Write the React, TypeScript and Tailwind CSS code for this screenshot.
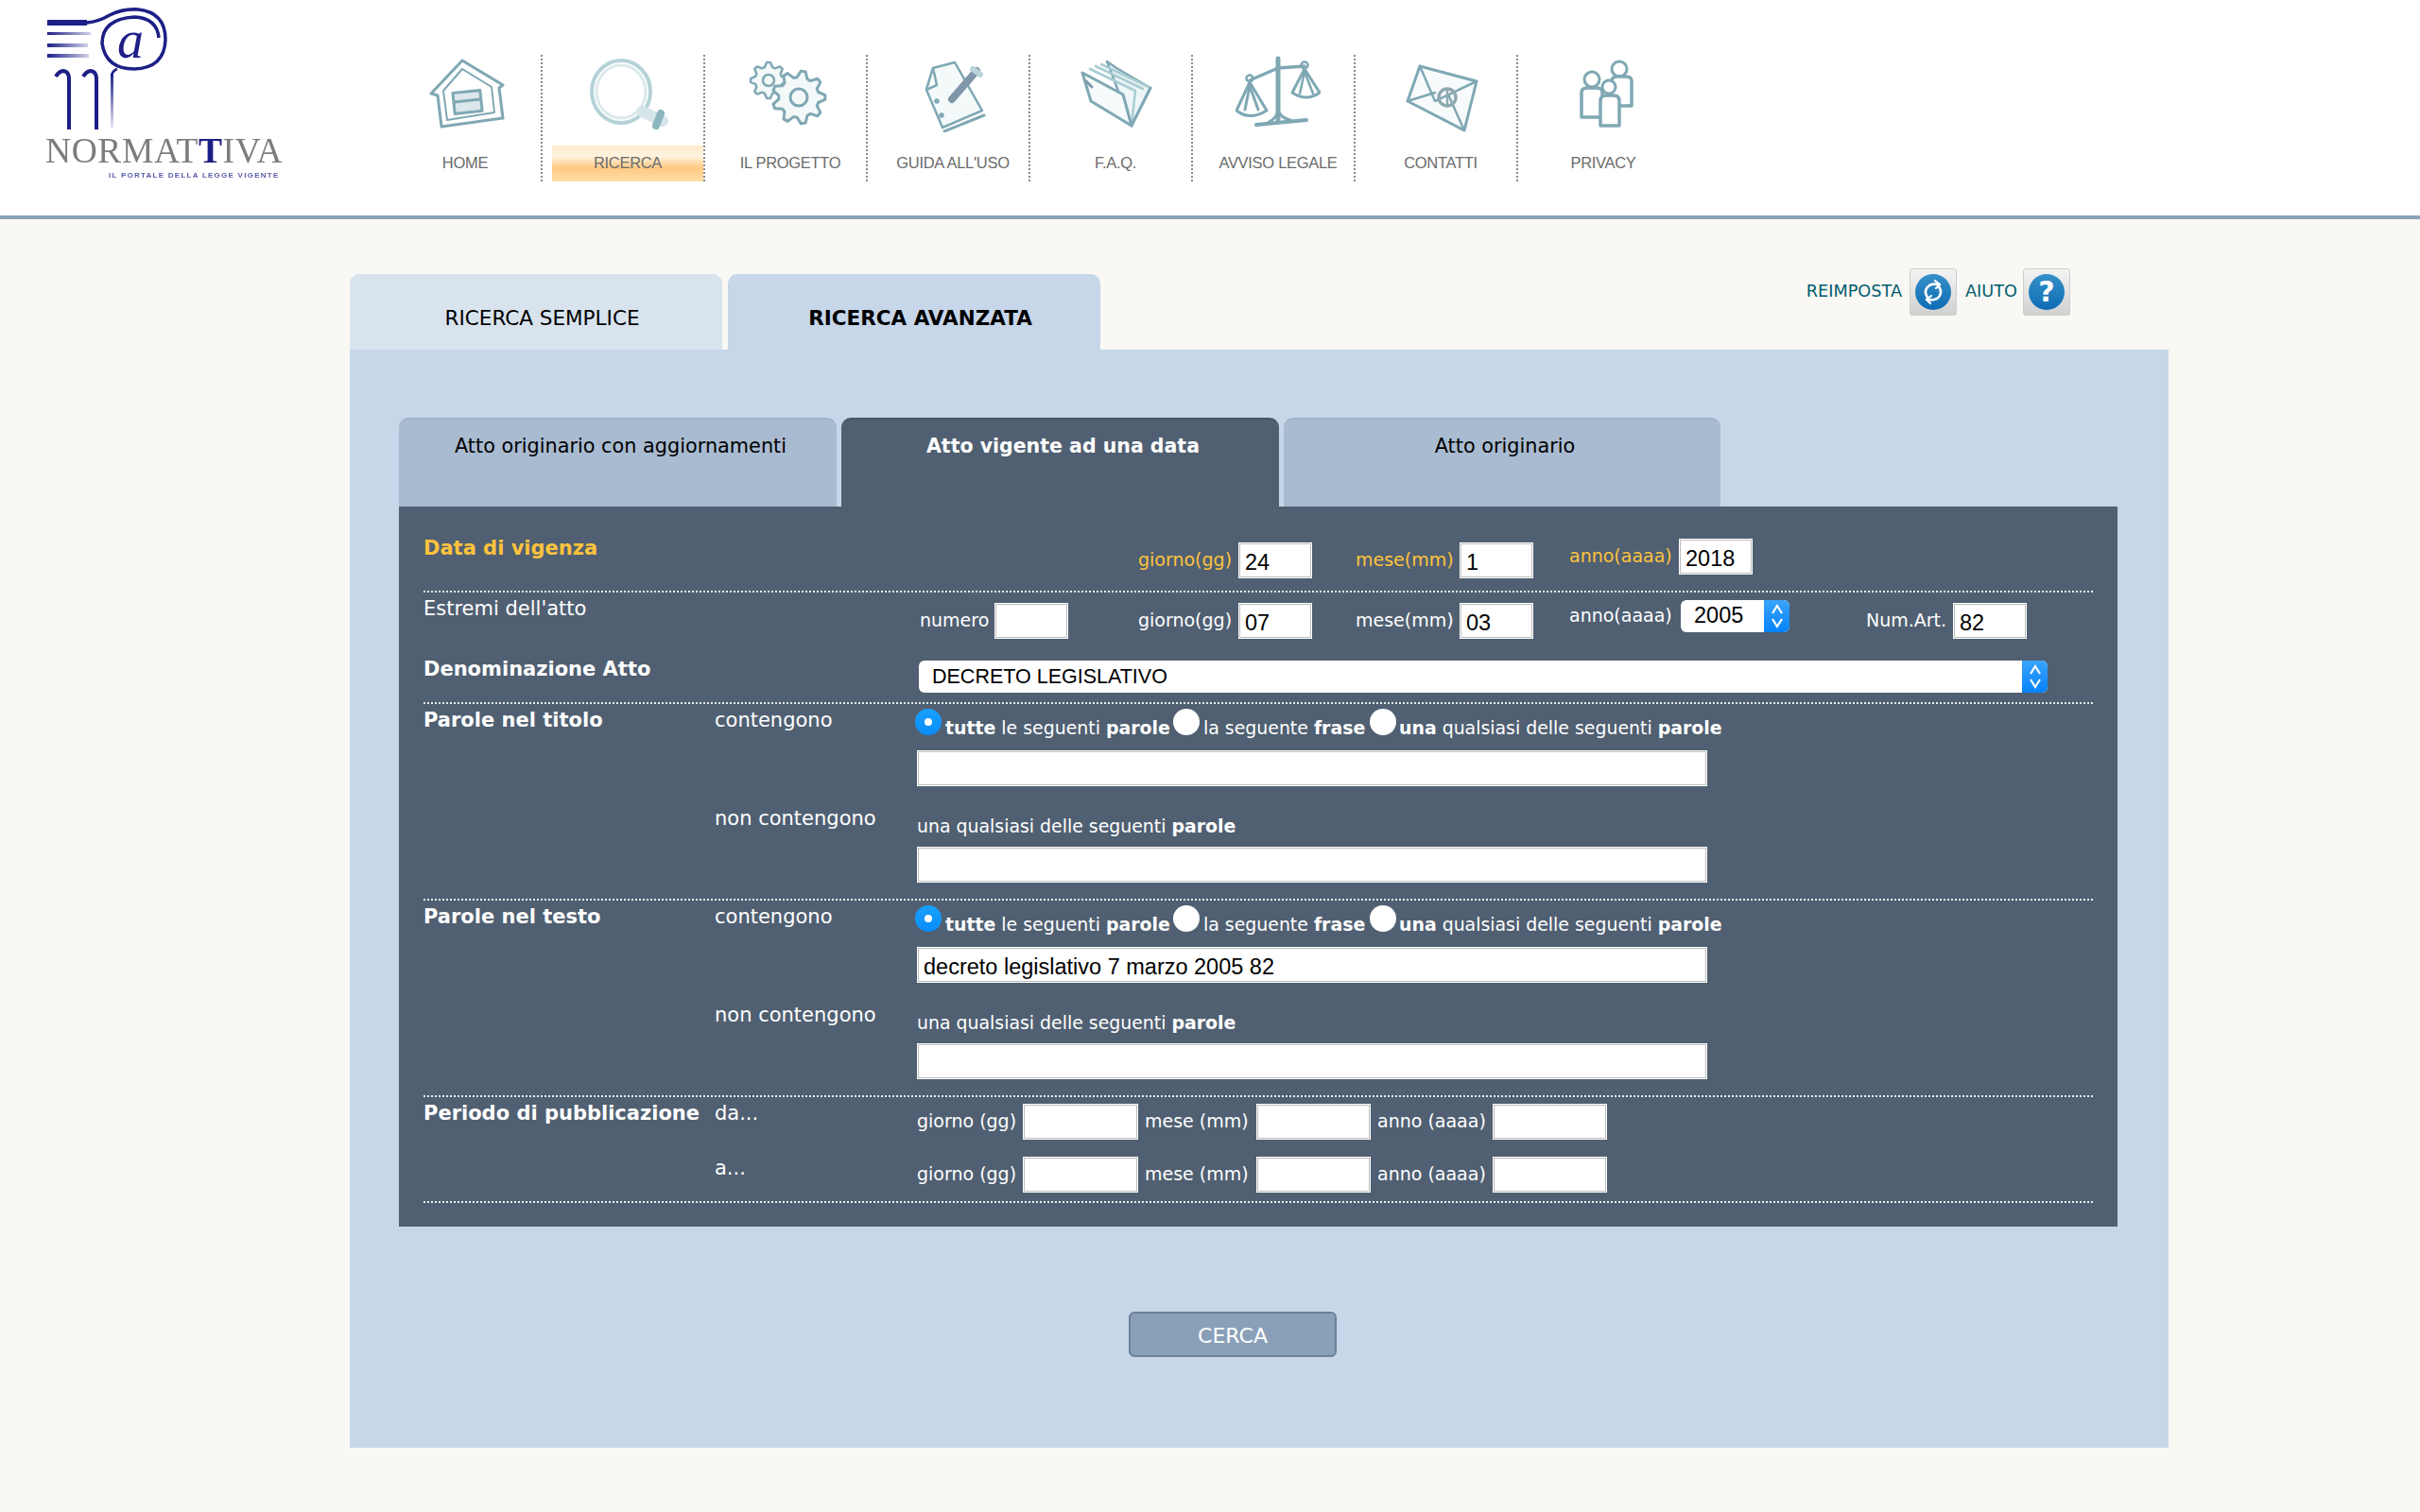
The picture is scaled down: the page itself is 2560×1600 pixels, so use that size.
import React, { ReactNode } from 'react';

const UI_FONT = "font-['DejaVu_Sans',Verdana,sans-serif]";
const STROKE = '#7fa8b4';

const gearPath = (cx: number, cy: number, r: number, teeth: number) => {
  const pts: string[] = [];
  const steps = teeth * 4;
  for (let i = 0; i < steps; i++) {
    const a = ((i - 0.5) / steps) * Math.PI * 2;
    const rad = i % 4 < 2 ? r : r * 0.76;
    pts.push(`${(cx + Math.cos(a) * rad).toFixed(1)} ${(cy + Math.sin(a) * rad).toFixed(1)}`);
  }
  return `M${pts.join('L')}Z`;
};

const IconShell = ({ children }: { children: ReactNode }) => (
  <svg
    width="90"
    height="84"
    viewBox="0 0 90 84"
    fill="none"
    stroke={STROKE}
    strokeWidth="2.5"
    strokeLinejoin="round"
    strokeLinecap="round"
    className="block -mt-[2px] blur-[0.5px]"
  >
    {children}
  </svg>
);

const HomeIcon = () => (
  <IconShell>
    <path d="M42 8 L9 43 L16 45 L20 78 L85 69 L81 37 L85 34 Z" strokeWidth="3" />
    <path d="M42 17 L22 40 L26 71 L76 63 L73 36 Z" strokeWidth="2" />
    <rect x="33" y="41" width="29" height="22" fill="#dbe7ea" strokeWidth="3" transform="rotate(-6 47 52)" />
    <path d="M34 52 L61 49" strokeWidth="3" />
  </IconShell>
);

const SearchIcon = () => (
  <IconShell>
    <ellipse cx="38" cy="41" rx="31" ry="33" stroke="#b4d2d7" strokeWidth="4" />
    <ellipse cx="38" cy="41" rx="26" ry="28" stroke="#dce9eb" strokeWidth="3" />
    <path d="M60 62 L82 72" stroke="#d5e5e8" strokeWidth="12" />
    <path d="M80 64 L75 77" stroke="#8bb6bf" strokeWidth="8" />
  </IconShell>
);

const GearsIcon = () => (
  <IconShell>
    <path d={gearPath(22, 29, 19, 8)} fill="#f3f8f9" strokeWidth="2.5" />
    <circle cx="22" cy="29" r="6" strokeWidth="2.5" />
    <path d={gearPath(54, 47, 28, 9)} fill="#f3f8f9" strokeWidth="3" />
    <circle cx="54" cy="47" r="9" strokeWidth="3" />
  </IconShell>
);

const GuideIcon = () => (
  <IconShell>
    <path d="M24 16 L47 10 L76 61 L34 79 L17 39 Z" fill="#f4f9fa" />
    <path d="M24 16 L17 39 L28 34 Z" fill="#fff" />
    <path d="M36 83 L78 66" strokeWidth="3" />
    <path d="M44 49 L70 19" stroke="#7f97a8" strokeWidth="8" />
    <path d="M66 17 L74 23" stroke="#b9d3d9" strokeWidth="6" />
    <circle cx="28" cy="51" r="1.5" />
    <circle cx="33" cy="66" r="1.5" />
  </IconShell>
);

const FolderIcon = () => (
  <IconShell>
    <path d="M36 9 L46 16 L82 37 L62 77 Z" fill="#eef6f7" />
    <path d="M18 17 L66 40 L62 77 M24 14 L74 38 M30 12 L80 36" stroke="#a9ccd3" />
    <path d="M10 21 L53 44 L62 77 L19 51 Z" fill="#f6fafb" strokeWidth="3" />
    <path d="M62 77 L82 37" strokeWidth="3" />
    <path d="M14 30 L20 36" stroke="#7f97a8" strokeWidth="3" />
  </IconShell>
);

const ScaleIcon = () => (
  <IconShell>
    <path d="M45 6 L45 72" strokeWidth="5" />
    <path d="M22 76 L75 71" strokeWidth="4" />
    <path d="M34 74 Q45 68 45 60 Q46 68 60 72" strokeWidth="3" />
    <path d="M15 29 L45 16 L73 14" strokeWidth="3.5" />
    <circle cx="15" cy="27" r="3.5" />
    <circle cx="73" cy="13" r="3.5" />
    <path d="M15 31 L1 61 Q15 72 33 61 Z" strokeWidth="3" />
    <path d="M15 35 L10 60 M15 35 L24 60" strokeWidth="3" />
    <path d="M73 17 L60 42 Q75 52 89 42 L73 17" strokeWidth="3" />
    <path d="M73 20 L68 43 M73 20 L82 43" strokeWidth="2.5" />
  </IconShell>
);

const EnvelopeIcon = () => (
  <IconShell>
    <path d="M23 14 L83 30 L70 82 L10 51 Z" fill="#f7fbfc" strokeWidth="3" />
    <path d="M23 14 L39 51 L83 30" strokeWidth="2.5" />
    <path d="M10 51 L39 42 M70 82 L53 44" strokeWidth="2.5" />
    <circle cx="52" cy="47" r="9" stroke="#8fa9b1" strokeWidth="3.5" />
    <path d="M52 38 L52 56" stroke="#8fa9b1" strokeWidth="2.5" />
  </IconShell>
);

const PeopleIcon = () => (
  <IconShell>
    <circle cx="62" cy="17" r="8" strokeWidth="3" />
    <path d="M54 56 L54 30 Q54 25 60 25 L69 25 Q75 25 75 30 L75 56 L60 56" fill="#fff" strokeWidth="3.5" />
    <circle cx="33" cy="28" r="8" strokeWidth="3" />
    <path d="M22 68 L22 42 Q22 37 28 37 L38 37 Q44 37 44 42 L44 68 Z" fill="#fff" strokeWidth="3.5" />
    <circle cx="51" cy="36" r="7" fill="#fff" strokeWidth="3" />
    <path d="M42 77 L42 51 Q42 45 48 45 L56 45 Q62 45 62 51 L62 77 Z" fill="#fff" strokeWidth="3.5" />
  </IconShell>
);

const NAV_ITEMS = [
  { label: 'HOME', icon: <HomeIcon /> },
  { label: 'RICERCA', icon: <SearchIcon />, active: true },
  { label: 'IL PROGETTO', icon: <GearsIcon /> },
  { label: "GUIDA ALL'USO", icon: <GuideIcon /> },
  { label: 'F.A.Q.', icon: <FolderIcon /> },
  { label: 'AVVISO LEGALE', icon: <ScaleIcon /> },
  { label: 'CONTATTI', icon: <EnvelopeIcon /> },
  { label: 'PRIVACY', icon: <PeopleIcon /> },
];

const Logo = () => (
  <div className="w-[402px] shrink-0">
    <svg width="320" height="144" viewBox="0 0 320 144" fill="none" className="block blur-[0.5px]">
      <defs>
        <linearGradient id="fade" x1="0" x2="1" y1="0" y2="0">
          <stop offset="0" stopColor="#1d1f86" />
          <stop offset="1" stopColor="#1d1f86" stopOpacity="0.2" />
        </linearGradient>
        <linearGradient id="fadeDown" x1="0" x2="0" y1="0" y2="1">
          <stop offset="0" stopColor="#1d1f86" />
          <stop offset="1" stopColor="#1d1f86" stopOpacity="0.1" />
        </linearGradient>
      </defs>
      <path
        d="M50 24 L92 24 Q104 23 116 16 Q130 9 146 10 Q175 13 175 42 Q174 72 142 73 Q112 73 108 46 Q108 20 142 18 Q166 19 168 40"
        stroke="#1d1f86"
        strokeWidth="3.5"
      />
      <path d="M50 24 L92 24" stroke="#1d1f86" strokeWidth="6" />
      <rect x="50" y="34" width="46" height="3" fill="url(#fade)" />
      <rect x="50" y="46" width="43" height="4" fill="url(#fade)" />
      <rect x="50" y="57" width="44" height="4" fill="url(#fade)" />
      <text x="124" y="61" fontFamily="'Liberation Serif',serif" fontStyle="italic" fontWeight="400" fontSize="56" fill="#1d1f86">
        a
      </text>
      <path d="M59 81 Q64 73 70 76 Q73 78 73 84 L73 137" stroke="#1d1f86" strokeWidth="4" />
      <path d="M88 81 Q93 73 99 76 Q102 78 102 84 L102 137" stroke="#1d1f86" strokeWidth="4" />
      <rect x="117" y="78" width="3" height="58" fill="url(#fadeDown)" />
      <path d="M118 80 Q119 75 124 73" stroke="#1d1f86" strokeWidth="2.5" />
    </svg>
    <p className="ml-[48px] mt-[-1px] h-[34px] font-['Liberation_Serif',serif] text-[37.5px] leading-[34px] tracking-[0.6px] text-[#7d7d7d] whitespace-nowrap blur-[0.4px]">
      NORMAT<span className="font-bold text-[#1d1f86]">T</span>IVA
    </p>
    <p className="ml-[115px] mt-[4px] font-['Liberation_Sans',sans-serif] text-[8px] font-bold leading-[10px] tracking-[1.25px] text-[#5a5ca8] whitespace-nowrap blur-[0.3px]">
      IL PORTALE DELLA LEGGE VIGENTE
    </p>
  </div>
);

const Header = () => (
  <header className="flex h-[232px] border-b-4 border-[#8aa2b9] bg-white">
    <Logo />
    <nav className="flex h-[134px] mt-[58px]">
      {NAV_ITEMS.map((item, i) => (
        <div
          key={item.label}
          className={`w-[172px] pl-[10px] flex flex-col ${i < NAV_ITEMS.length - 1 ? 'border-r-2 border-dotted border-[#8b8b8b]' : 'pr-[2px]'}`}
        >
          <div className="flex justify-center">{item.icon}</div>
          <div
            className={`mt-[14px] h-[38px] pb-[2px] flex items-center justify-center font-['Liberation_Sans',sans-serif] text-[16.5px] tracking-[-0.3px] text-[#6b6b6b] whitespace-nowrap ${
              item.active ? 'bg-[linear-gradient(#ffeacb_0%,#fff3e0_30%,#fdc982_62%,#ffdfa6_100%)]' : ''
            }`}
          >
            {item.label}
          </div>
        </div>
      ))}
    </nav>
  </header>
);

const Box = ({ w = 'w-[78px]', value = '' }: { w?: string; value?: string }) => (
  <input
    defaultValue={value}
    className={`${w} h-[38px] shrink-0 bg-white border border-white shadow-[inset_0_0_0_1px_#bdbdbd] pl-[6px] pr-[5px] pt-[4px] font-['Liberation_Sans',sans-serif] text-[23.5px] leading-[34px] text-black outline-none`}
  />
);

const Stepper = () => (
  <div className="w-[28px] h-[34px] rounded-r-[6px] bg-[linear-gradient(#3aa4fb,#0682fb)] shrink-0 flex items-center justify-center -mr-[1px]">
    <svg width="16" height="28" viewBox="0 0 16 28" fill="none" stroke="white" strokeWidth="2.2">
      <path d="M3 11 L8 3 L13 11" />
      <path d="M3 17 L8 25 L13 17" />
    </svg>
  </div>
);

const Select = ({ w, value, textClass }: { w: string; value: string; textClass: string }) => (
  <div className={`${w} h-[34px] shrink-0 flex items-center bg-white rounded-[6px] overflow-hidden`}>
    <span className={`flex-1 pl-[14px] ${textClass} font-['Liberation_Sans',sans-serif] text-black whitespace-nowrap`}>{value}</span>
    <Stepper />
  </div>
);

const Radio = ({ checked = false }: { checked?: boolean }) => (
  <span
    className={`w-[28px] h-[28px] rounded-full shrink-0 flex items-center justify-center ${
      checked ? 'bg-[linear-gradient(#18a0ff,#0a8cf8)]' : 'bg-white'
    }`}
  >
    {checked && <span className="w-[8px] h-[8px] rounded-full bg-white" />}
  </span>
);

const Small = ({ children }: { children: ReactNode }) => (
  <span className="text-[18.9px] leading-[28px] text-white whitespace-nowrap">{children}</span>
);

const WordRows = ({ value = '' }: { value?: string }) => (
  <div className="flex-1 flex flex-col items-start">
    <div className="flex mt-[5px] -ml-[2px] h-[28px]">
      <Radio checked />
      <span className="ml-[4px] mt-[6px] w-[241px]">
        <Small>
          <b>tutte</b> le seguenti <b>parole</b>
        </Small>
      </span>
      <Radio />
      <span className="ml-[4px] mt-[6px] w-[176px]">
        <Small>
          la seguente <b>frase</b>
        </Small>
      </span>
      <Radio />
      <span className="ml-[3px] mt-[6px]">
        <Small>
          <b>una</b> qualsiasi delle seguenti <b>parole</b>
        </Small>
      </span>
    </div>
    <div className="mt-[16px]">
      <Box w="w-[836px]" value={value} />
    </div>
    <div className="mt-[28px] h-[28px]">
      <Small>
        una qualsiasi delle seguenti <b>parole</b>
      </Small>
    </div>
    <div className="mt-[8px]">
      <Box w="w-[836px]" />
    </div>
  </div>
);

const WordSection = ({ title, value }: { title: string; value?: string }) => (
  <section className="flex h-[208px] border-b-2 border-dotted border-[#eceef1]">
    <h3 className="w-[308px] mt-[3px] shrink-0 text-[21px] font-bold leading-[28px] text-white">{title}</h3>
    <div className="w-[214px] shrink-0 text-[21px] leading-[28px] text-white">
      <p className="mt-[3px]">contengono</p>
      <p className="mt-[76px]">non contengono</p>
    </div>
    <WordRows value={value} />
  </section>
);

const DateCell = ({ label, w, box }: { label: string; w: string; box?: ReactNode }) => (
  <div className="flex items-center shrink-0">
    <span className={`${w} pb-[2px] text-[19px] leading-[28px] whitespace-nowrap`}>{label}</span>
    {box}
  </div>
);

const PeriodRow = ({ className }: { className: string }) => (
  <div className={`flex items-center ${className}`}>
    <DateCell label="giorno (gg)" w="w-[112px]" box={<Box w="w-[122px]" />} />
    <DateCell label="mese (mm)" w="w-[125px] pl-[7px]" box={<Box w="w-[121px]" />} />
    <DateCell label="anno (aaaa)" w="w-[129px] pl-[7px]" box={<Box w="w-[121px]" />} />
  </div>
);

const SearchForm = () => (
  <div className={`h-[762px] bg-[#506072] px-[26px] ${UI_FONT}`}>
    <section className="flex h-[91px] border-b-2 border-dotted border-[#eceef1] text-[#fdc33c]">
      <h3 className="w-[756px] shrink-0 mt-[30px] text-[21px] font-bold leading-[28px]">Data di vigenza</h3>
      <div className="w-[230px] shrink-0 mt-[38px]">
        <DateCell label="giorno(gg)" w="w-[106px]" box={<Box value="24" />} />
      </div>
      <div className="w-[226px] shrink-0 mt-[38px]">
        <DateCell label="mese(mm)" w="w-[110px]" box={<Box value="1" />} />
      </div>
      <div className="mt-[34px]">
        <DateCell label="anno(aaaa)" w="w-[116px]" box={<Box value="2018" />} />
      </div>
    </section>
    <section className="flex h-[63px] text-white">
      <h3 className="w-[525px] shrink-0 mt-[3px] text-[21px] leading-[28px]">Estremi dell'atto</h3>
      <div className="w-[231px] shrink-0 mt-[11px]">
        <DateCell label="numero" w="w-[79px]" box={<Box />} />
      </div>
      <div className="w-[230px] shrink-0 mt-[11px]">
        <DateCell label="giorno(gg)" w="w-[106px]" box={<Box value="07" />} />
      </div>
      <div className="w-[226px] shrink-0 mt-[11px]">
        <DateCell label="mese(mm)" w="w-[110px]" box={<Box value="03" />} />
      </div>
      <div className="w-[314px] shrink-0 mt-[8px]">
        <DateCell label="anno(aaaa)" w="w-[118px]" box={<Select w="w-[115px]" value="2005" textClass="text-[23.5px]" />} />
      </div>
      <div className="mt-[11px]">
        <DateCell label="Num.Art." w="w-[92px]" box={<Box value="82" />} />
      </div>
    </section>
    <section className="flex h-[55px] border-b-2 border-dotted border-[#eceef1] text-white">
      <h3 className="w-[524px] shrink-0 mt-[4px] text-[21px] font-bold leading-[28px]">Denominazione Atto</h3>
      <div className="mt-[9px]">
        <Select w="w-[1194px]" value="DECRETO LEGISLATIVO" textClass="text-[21.5px]" />
      </div>
    </section>
    <WordSection title="Parole nel titolo" />
    <WordSection title="Parole nel testo" value="decreto legislativo 7 marzo 2005 82" />
    <section className="flex h-[112px] border-b-2 border-dotted border-[#eceef1] text-white">
      <h3 className="w-[308px] shrink-0 mt-[3px] text-[21px] font-bold leading-[28px] whitespace-nowrap">Periodo di pubblicazione</h3>
      <div className="w-[214px] shrink-0 text-[21px] leading-[28px]">
        <p className="mt-[3px]">da...</p>
        <p className="mt-[30px]">a...</p>
      </div>
      <div className="flex-1">
        <PeriodRow className="mt-[7px]" />
        <PeriodRow className="mt-[18px]" />
      </div>
    </section>
  </div>
);

const ActionButton = ({ children }: { children: ReactNode }) => (
  <div className="w-[50px] h-[50px] rounded-[4px] bg-[linear-gradient(#f4f4f4,#d0d0d0)] shadow-[inset_0_0_0_1px_#cfcfcf] flex items-center justify-center shrink-0">
    <div className="w-[38px] h-[38px] rounded-full bg-[linear-gradient(#3590c8,#0f6cb5)] flex items-center justify-center">{children}</div>
  </div>
);

const Actions = () => (
  <div className={`ml-auto mr-[104px] -mt-[6px] flex items-center h-[50px] text-[17.7px] text-[#045c6e] ${UI_FONT}`}>
    <span className="mr-[8px] pb-[2px]">REIMPOSTA</span>
    <ActionButton>
      <svg width="30" height="30" viewBox="0 0 30 30" fill="none" stroke="white" strokeWidth="2.6" strokeLinecap="round">
        <path d="M9 21 Q4 13 11 8 Q15 6 21 7" />
        <path d="M21 9 Q26 17 19 22 Q15 24 9 23" />
        <path d="M17 3 L22 7 L18 11 M13 19 L8 23 L12 27" strokeWidth="2.2" />
      </svg>
    </ActionButton>
    <span className="ml-[9px] mr-[6px] pb-[2px]">AIUTO</span>
    <ActionButton>
      <span className="text-[30px] font-bold leading-none text-white">?</span>
    </ActionButton>
  </div>
);

const App = () => (
  <div className="min-h-[1600px] bg-[#f9f8f4]">
    <Header />
    <main className="ml-[370px] w-[1924px] pt-[58px]">
      <div className={`flex h-[80px] gap-[6px] text-[21.5px] text-black ${UI_FONT}`}>
        <div className="w-[394px] h-full rounded-t-[10px] bg-[#d8e3ed] flex justify-center pl-[13px] pt-[31px]">RICERCA SEMPLICE</div>
        <div className="w-[394px] h-full rounded-t-[10px] bg-[#c7d6e9] flex justify-center pl-[13px] pt-[31px] font-bold">RICERCA AVANZATA</div>
        <Actions />
      </div>
      <div className="h-[1162px] bg-[#c7d6e9] pl-[52px] pr-[54px] pt-[72px]">
        <div className={`flex h-[94px] gap-[5px] text-[20.8px] ${UI_FONT}`}>
          <div className="w-[463px] rounded-t-[10px] bg-[#a9bbd0] border-t-2 border-[#a0b2c8] flex justify-center pl-[6px] pt-[13px] text-black">
            Atto originario con aggiornamenti
          </div>
          <div className="w-[463px] rounded-t-[10px] bg-[#506072] border-t-2 border-[#46566a] flex justify-center pl-[6px] pt-[13px] text-[20.5px] font-bold text-white">
            Atto vigente ad una data
          </div>
          <div className="w-[462px] rounded-t-[10px] bg-[#a9bbd0] border-t-2 border-[#a0b2c8] flex justify-center pl-[6px] pt-[13px] text-black">
            Atto originario
          </div>
        </div>
        <SearchForm />
        <div className="mt-[90px] flex">
          <button
            className={`ml-[772px] w-[220px] h-[48px] pt-[2px] rounded-[6px] bg-[#8aa0b8] border-2 border-[#6c8098] text-[22px] text-white ${UI_FONT}`}
          >
            CERCA
          </button>
        </div>
      </div>
    </main>
  </div>
);

export default App;
